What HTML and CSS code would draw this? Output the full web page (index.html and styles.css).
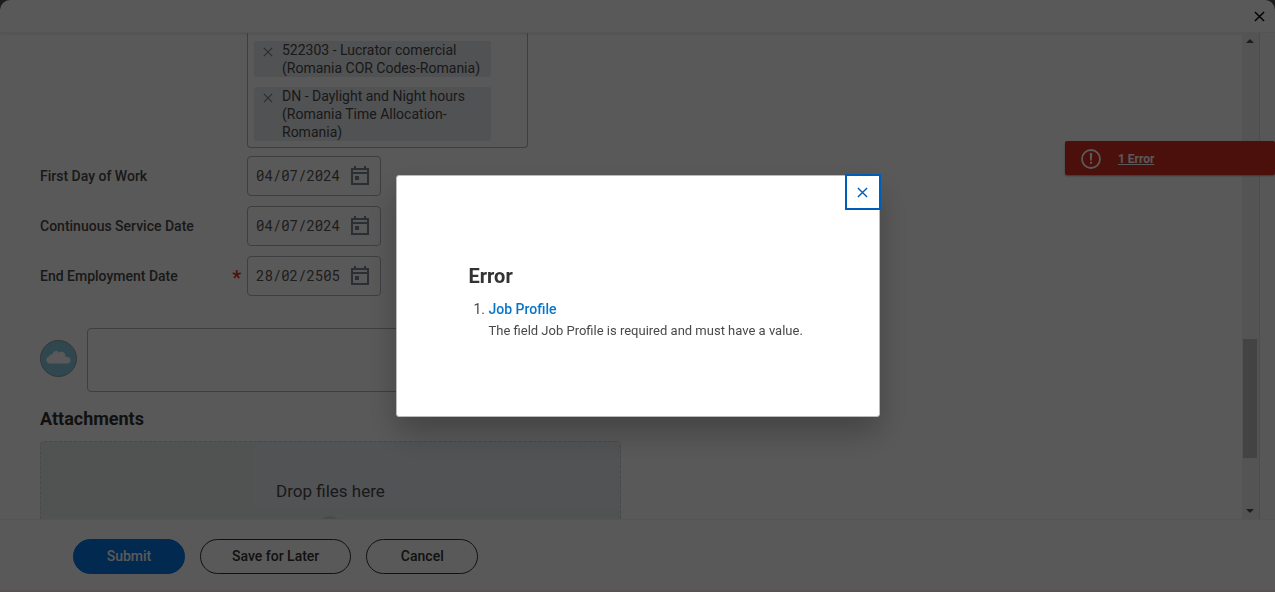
FILE: index.html
```html
<!DOCTYPE html>
<html lang="en">
<head>
<meta charset="utf-8">
<title>Employment Details</title>
<link rel="stylesheet" href="styles.css">
</head>
<body>
<svg class="defs" aria-hidden="true">
  <symbol id="x" viewBox="0 0 12 12"><path d="M1 1l10 10M11 1L1 11" fill="none" stroke="currentColor" stroke-width="1.5"/></symbol>
  <symbol id="calendar" viewBox="0 0 20 20">
    <path d="M2 3h16v15H2zM2 7h16M5 3V0M15 3V0" fill="none" stroke="currentColor" stroke-width="2"/>
    <path d="M5 10h4v4H5z" fill="currentColor"/>
  </symbol>
</svg>
<div class="page">
  <header class="page-header">
    <button class="icon-button" type="button" aria-label="Close page"><svg width="11" height="11"><use href="#x"/></svg></button>
  </header>
  <div class="page-body">
    <main class="content">
      <div class="chip-box">
        <div class="chip">
          <button class="chip-remove" type="button" aria-label="Remove Lucrator comercial"><svg width="10" height="10"><use href="#x"/></svg></button>
          <span>522303 - Lucrator comercial<br>(Romania COR Codes-Romania)</span>
        </div>
        <div class="chip">
          <button class="chip-remove" type="button" aria-label="Remove Daylight and Night hours"><svg width="10" height="10"><use href="#x"/></svg></button>
          <span>DN - Daylight and Night hours<br>(Romania Time Allocation-<br>Romania)</span>
        </div>
      </div>
      <div class="field">
        <label class="label" for="first-day">First Day of Work</label>
        <div class="date-box"><input class="date" id="first-day" type="text" value="04/07/2024"><button class="picker" type="button" aria-label="Choose first day"><svg width="20" height="20"><use href="#calendar"/></svg></button></div>
      </div>
      <div class="field">
        <label class="label" for="service-date">Continuous Service Date</label>
        <div class="date-box"><input class="date" id="service-date" type="text" value="04/07/2024"><button class="picker" type="button" aria-label="Choose service date"><svg width="20" height="20"><use href="#calendar"/></svg></button></div>
      </div>
      <div class="field">
        <label class="label" for="end-date">End Employment Date <span class="required">*</span></label>
        <div class="date-box"><input class="date" id="end-date" type="text" value="28/02/2505" required><button class="picker" type="button" aria-label="Choose end date"><svg width="20" height="20"><use href="#calendar"/></svg></button></div>
      </div>
      <div class="comment">
        <svg class="avatar" width="37" height="37" viewBox="0 0 37 37" aria-hidden="true">
          <circle cx="18.500" cy="18.500" r="18" fill="#8ccbe4" stroke="#999"/>
          <path d="M9.500 23.500a3.600 3.600 0 0 1-.3-7.100 3 3 0 0 1 3.200-2c.7-2.400 2-3.400 3.600-3.400 1.500 0 2.500.6 3.300 1.500 2.500-1.500 5.700-.3 6 3 .1.500 0 .9-.1 1.300 2.800-.5 5.300 1 5.300 3.500 0 1.900-1.200 3.200-3 3.200z" fill="#fff"/>
        </svg>
        <textarea class="comment-box" aria-label="Comment"></textarea>
      </div>
      <h2 class="section-title">Attachments</h2>
      <div class="dropzone">
        <div class="drop-left"></div>
        <div class="drop-main"><div class="drop-text">Drop files here</div><div class="drop-circle"></div></div>
      </div>
    </main>
    <div class="scrollbar" aria-hidden="true">
      <svg width="8" height="4" viewBox="0 0 8 4"><path d="M0 4l4-4 4 4z" fill="#505050"/></svg>
      <div class="thumb"></div>
      <svg width="8" height="4" viewBox="0 0 8 4"><path d="M0 0l4 4 4-4z" fill="#505050"/></svg>
    </div>
    <div class="gutter"></div>
  </div>
  <footer class="page-footer">
    <button class="button primary" type="button">Submit</button>
    <button class="button" type="button">Save for Later</button>
    <button class="button" type="button">Cancel</button>
  </footer>
  <div class="error-banner">
    <svg width="20" height="20" viewBox="0 0 20 20" aria-hidden="true"><circle cx="10" cy="10" r="9" fill="none" stroke="currentColor" stroke-width="1.800"/><path d="M8.800 4h2.400l-.3 7.500H9.100zM8.900 12.800h2.200v2H8.900z" fill="currentColor"/></svg>
    <a class="error-link" href="#errors">1 Error</a>
  </div>
</div>
<div class="overlay">
  <section class="dialog" id="errors" role="dialog" aria-labelledby="dialog-title">
    <button class="dialog-close" type="button" aria-label="Close"><svg width="11" height="11"><use href="#x"/></svg></button>
    <h1 class="dialog-title" id="dialog-title">Error</h1>
    <ol class="errors">
      <li><a class="profile-link" href="#profile">Job Profile</a><p class="message">The field Job Profile is required and must have a value.</p></li>
    </ol>
  </section>
</div>
</body>
</html>
```
FILE: styles.css
```css
* { box-sizing: border-box; }
body {
  margin: 0;
  background: #505058;
  color: #494949;
  font: 14px/18px Roboto, "Liberation Sans", sans-serif;
}
button { font: inherit; cursor: pointer; }
.defs { position: absolute; width: 0; height: 0; }
.page {
  position: relative;
  display: flex;
  flex-direction: column;
  height: 100vh;
  overflow: hidden;
  background: #fff;
  border-radius: 10px 10px 0 0;
  border-bottom: 2px solid #fae8f0;
}
.page-header {
  display: flex;
  flex: none;
  align-items: center;
  justify-content: flex-end;
  height: 33px;
  padding-right: 10px;
  border-bottom: 1px solid #f0f0f0;
}
.icon-button, .chip-remove, .picker {
  display: flex;
  padding: 0;
  border: 0;
  background: none;
}
.icon-button { color: #000; }
.page-body { display: flex; flex: 1; min-height: 0; box-shadow: inset 0 3px 3px -2px #e4e4e4; }
.content { flex: 1; min-width: 0; overflow: hidden; padding-left: 40px; }
.chip-box {
  display: flex;
  flex-direction: column;
  gap: 10px;
  width: 281px;
  margin-left: 207px;
  margin-bottom: 8px;
  padding: 8px 36px 6px 6px;
  border: 1px solid #b0b2b5;
  border-top: 0;
  border-radius: 0 0 4px 4px;
}
.chip {
  display: flex;
  align-items: flex-start;
  gap: 9px;
  padding-left: 9px;
  border-radius: 2px;
  background: #e8ebee;
  white-space: nowrap;
}
.chip-remove { padding-top: 6px; color: #7b858f; }
.field { display: flex; align-items: center; margin-bottom: 10px; }
.label {
  display: flex;
  justify-content: space-between;
  width: 207px;
  padding-right: 6px;
  font-weight: 500;
}
.required { color: #de2e21; font-size: 20px; line-height: 22px; height: 18px; }
.date-box {
  display: flex;
  align-items: center;
  justify-content: space-between;
  width: 134px;
  height: 40px;
  padding: 0 10px 0 8px;
  border: 1px solid #b0b2b5;
  border-radius: 4px;
}
.date {
  width: 88px;
  padding: 0;
  border: 0;
  background: none;
  color: #555;
  font: 14px/20px "Roboto Mono", "DejaVu Sans Mono", monospace;
}
.picker { color: #7b858f; }
.comment { display: flex; align-items: center; gap: 10px; margin-top: 32px; }
.avatar { margin-bottom: 4px; }
.comment-box {
  width: 534px;
  height: 64px;
  border: 1px solid #b0b2b5;
  border-radius: 4px;
  background: none;
  resize: none;
}
.section-title { margin: 15px 0 10px; font-size: 18px; font-weight: 700; line-height: 24px; color: #333; }
.dropzone {
  display: flex;
  width: 581px;
  height: 120px;
  border: 1px dashed #ced0d2;
  border-radius: 4px;
  background: #e9edeb;
}
.drop-left { width: 213px; }
.drop-main { flex: 1; }
.drop-text {
  height: 67px;
  padding: 37px 0 0 22px;
  background: #eaeef2;
  font-size: 17px;
  line-height: 24px;
}
.drop-circle {
  width: 24px;
  height: 24px;
  margin: 7px 0 0 64px;
  border-radius: 12px;
  background: #ced3d9;
}
.scrollbar {
  display: flex;
  flex-direction: column;
  align-items: center;
  justify-content: space-between;
  width: 17px;
  padding: 6px 1px 6px 0;
  background: #f1f1f1;
}
.thumb { width: 14px; height: 119px; margin-top: 244px; background: #c1c1c1; }
.gutter { width: 16px; border-left: 1px solid #dcdcdc; background: #fafafa; }
.page-footer {
  display: flex;
  flex: none;
  align-items: center;
  gap: 15px;
  height: 71px;
  padding: 3px 73px 0;
  border-top: 1px solid #f0f0f0;
}
.button {
  min-width: 112px;
  height: 35px;
  padding: 0 31px 2px;
  border: 1px solid #333;
  border-radius: 18px;
  background: none;
  color: #333;
  font-weight: 500;
}
.primary { border-color: #0875e1; background: #0875e1; color: #fff; }
.error-banner {
  position: absolute;
  top: 141px;
  right: 0;
  display: flex;
  align-items: center;
  gap: 17px;
  width: 210px;
  height: 34px;
  padding: 1px 0 0 16px;
  border-radius: 2px;
  background: #d62e20;
  box-shadow: 0 1px 2px #999;
  color: #fff;
}
.error-link { color: inherit; font-size: 12px; font-weight: 700; }
.overlay {
  position: fixed;
  inset: 0;
  display: flex;
  align-items: center;
  justify-content: center;
  background: rgba(0, 0, 0, .65);
}
.dialog {
  position: relative;
  width: 484px;
  max-width: 100%;
  padding: 88px 72px 76px;
  border: 1px solid #bbb;
  border-radius: 3px;
  background: #fff;
  box-shadow: 0 16px 32px rgba(0, 0, 0, .25);
}
.dialog-close {
  position: absolute;
  top: -2px;
  right: -2px;
  display: flex;
  align-items: center;
  justify-content: center;
  width: 36px;
  height: 36px;
  padding: 0;
  border: 2px solid #005cb9;
  background: #fff;
  color: #005cb9;
}
.dialog-title { margin: 0 0 11px; color: #333; font-size: 20px; font-weight: 700; line-height: 24px; }
.errors { margin: 0; padding-left: 20px; line-height: 20px; }
.profile-link { color: #0875c9; font-weight: 500; text-decoration: none; }
.message { margin: 3px 0 0; font-size: 13px; line-height: 18px; white-space: nowrap; }
```
